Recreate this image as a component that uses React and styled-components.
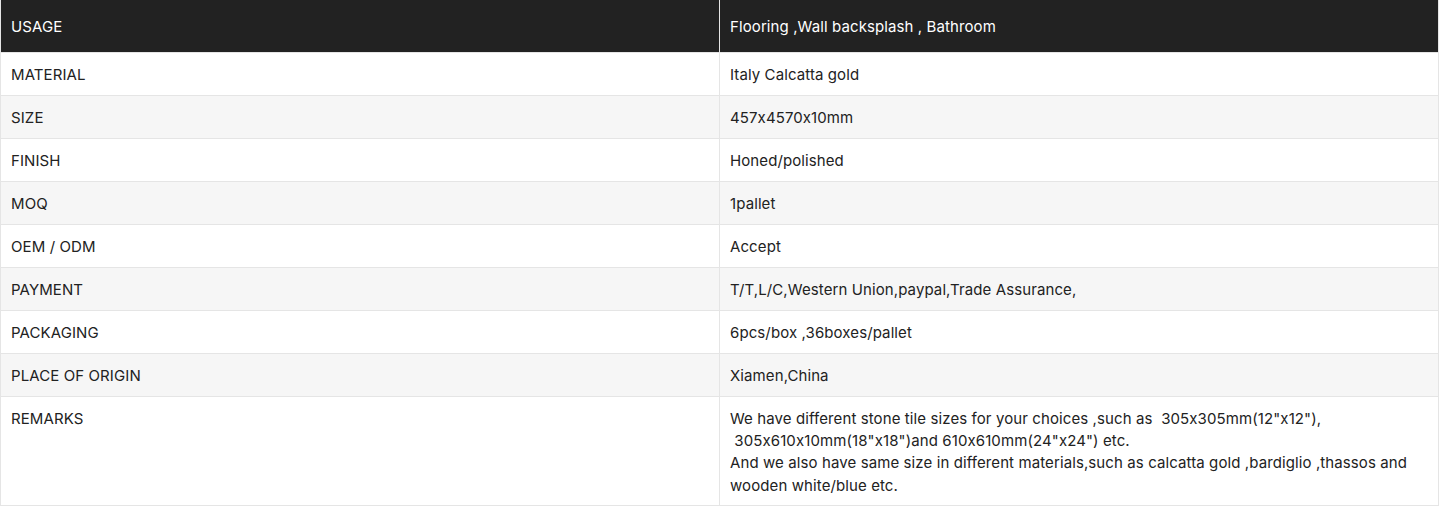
import React from "react";
import styled, { createGlobalStyle } from "styled-components";

const GlobalStyle = createGlobalStyle`
  body {
    margin: 0;
    background: #fff;
    font-family: Inter, "Liberation Sans", Arial, sans-serif;
  }
`;

const rows = [
  ["MATERIAL", "Italy Calcatta gold"],
  ["SIZE", "457x4570x10mm"],
  ["FINISH", "Honed/polished"],
  ["MOQ", "1pallet"],
  ["OEM / ODM", "Accept"],
  ["PAYMENT", "T/T,L/C,Western Union,paypal,Trade Assurance,"],
  ["PACKAGING", "6pcs/box ,36boxes/pallet"],
  ["PLACE OF ORIGIN", "Xiamen,China"],
];

export default function App() {
  return (
    <>
      <GlobalStyle />
      <SpecTable>
        <thead>
          <tr>
            <HeadCell>USAGE</HeadCell>
            <HeadCell>Flooring ,Wall backsplash , Bathroom</HeadCell>
          </tr>
        </thead>
        <tbody>
          {rows.map(([label, value], i) => (
            <Row key={label} $striped={i % 2 === 1}>
              <Cell>{label}</Cell>
              <Cell>{value}</Cell>
            </Row>
          ))}
          <Row>
            <Cell $tall>REMARKS</Cell>
            <Cell $tall>
              We have different stone tile sizes for your choices ,such as{" "}
              {"\u00a0"}305x305mm(12"x12"), {"\u00a0"}305x610x10mm(18"x18")and
              610x610mm(24"x24") etc.
              <br />
              And we also have same size in different materials,such as calcatta
              gold ,bardiglio ,thassos and wooden white/blue etc.
            </Cell>
          </Row>
        </tbody>
      </SpecTable>
    </>
  );
}

const SpecTable = styled.table`
  width: 1439px;
  border-collapse: collapse;
  table-layout: fixed;
  font-size: 15px;
  letter-spacing: 0.1px;
  color: #222;
`;

const HeadCell = styled.th`
  width: 50%;
  height: 52px;
  padding: 2px 10px 0;
  box-sizing: border-box;
  background: #222;
  color: #fff;
  font-weight: normal;
  line-height: 22px;
  text-align: left;
  vertical-align: middle;
  border: 1px solid #e5e5e5;
  border-top: none;
  border-bottom: none;
`;

const Row = styled.tr`
  background: ${(p) => (p.$striped ? "#f6f6f6" : "#fff")};
`;

const Cell = styled.td`
  padding: ${(p) => (p.$tall ? "11px 10px 8px" : "11px 10px 9px")};
  line-height: ${(p) => (p.$tall ? "22.4px" : "22px")};
  text-align: left;
  vertical-align: ${(p) => (p.$tall ? "top" : "middle")};
  border: 1px solid #e5e5e5;
`;
